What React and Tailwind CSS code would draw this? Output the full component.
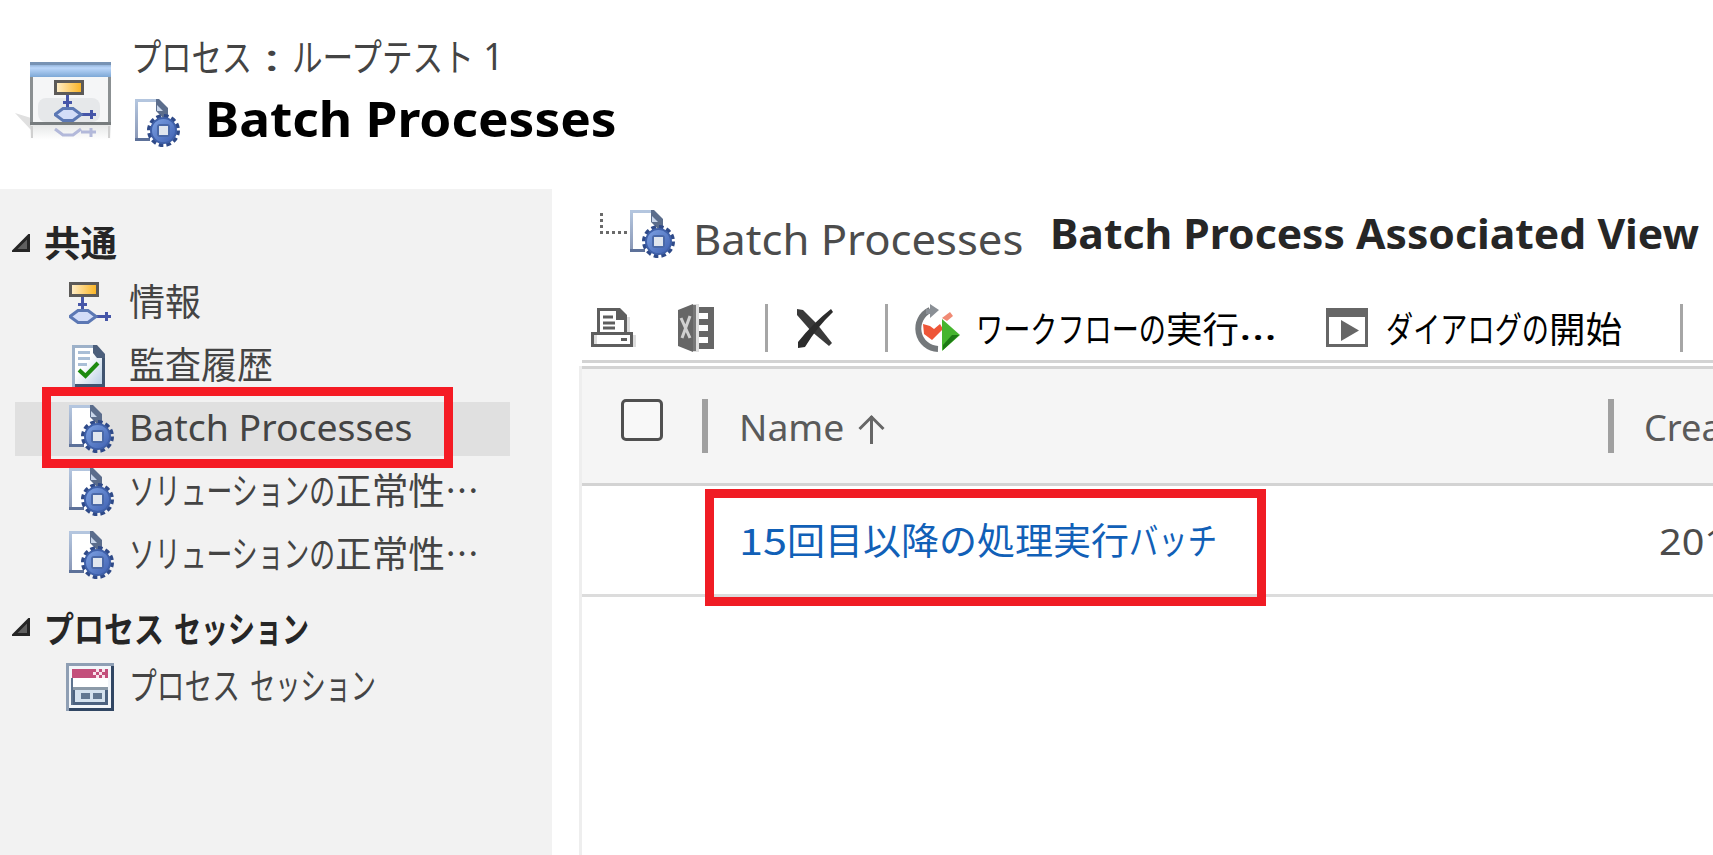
import React, { useLayoutEffect, useRef, useState } from "react";

const FONT = "font-['Noto_Sans','Noto_Sans_CJK_JP',sans-serif]";
const JP = "font-['Noto_Sans_CJK_JP',sans-serif]";

// Single line of text condensed or widened to a given width.
function FitText({ width, className = "", jp = false, children }) {
  const ref = useRef(null);
  const [s, setS] = useState(1);
  useLayoutEffect(() => {
    setS(width / ref.current.offsetWidth);
  }, [width]);
  return (
    <div className="shrink-0" style={{ width }}>
      <span
        ref={ref}
        className={`inline-block origin-left whitespace-nowrap ${jp ? JP : FONT} ${className}`}
        style={{ transform: `scaleX(${s})` }}
      >
        {children}
      </span>
    </div>
  );
}

// A line made of runs, each with its own width: kana are set narrower than kanji.
function FitRuns({ runs, className }) {
  return (
    <div className="flex shrink-0">
      {runs.map(([text, width, jp = true]) => (
        <FitText key={text} width={width} jp={jp} className={className}>{text}</FitText>
      ))}
    </div>
  );
}

function GearDoc({ className = "" }) {
  return (
    <svg viewBox="0 0 45 48" className={`h-12 w-[45px] shrink-0 ${className}`}>
      <defs>
        <linearGradient id="gear" x1="0" y1="0" x2="1" y2="1">
          <stop offset="0" stopColor="#7fa3e4" />
          <stop offset="1" stopColor="#3d5fb0" />
        </linearGradient>
        <linearGradient id="sheet" x1="0" y1="0" x2="0" y2="1">
          <stop offset="0" stopColor="#b4c6df" />
          <stop offset="1" stopColor="#8795b4" />
        </linearGradient>
      </defs>
      <path d="M1.5 1.5H22L30 10V42H1.5Z" fill="#fff" />
      <path d="M22 1.500H1.500V42" fill="none" stroke="url(#sheet)" strokeWidth="3" />
      <path d="M0 40.500H15" stroke="#5d7199" strokeWidth="3" />
      <path d="M21 0H24L33 9V18H27L21 12Z" fill="#5b6d8c" />
      <path d="M22 12V6L28 12Z" fill="#c9d6ea" />
      <circle cx="28.500" cy="31.500" r="14" fill="none" stroke="#2f4a88" strokeWidth="5" strokeDasharray="4.400 2.930" />
      <circle cx="28.500" cy="31.500" r="12.500" fill="url(#gear)" stroke="#3f60a8" strokeWidth="2" />
      <rect x="22" y="25" width="13" height="13" rx="3" fill="#4a69a8" />
      <rect x="24" y="27" width="9" height="9" fill="#e0e6ee" />
    </svg>
  );
}

function FlowShapes() {
  return (
    <>
      <defs>
        <linearGradient id="gold" x1="0" x2="1">
          <stop offset="0" stopColor="#fff0cf" />
          <stop offset="1" stopColor="#fbb21c" />
        </linearGradient>
      </defs>
      <rect x="1.500" y="1.500" width="27" height="12" fill="url(#gold)" stroke="#5c5a58" strokeWidth="3" />
      <path d="M13.500 15V28M9 22.500H18M27 34.500H42M37.500 30V39" stroke="#4656a8" strokeWidth="3" />
      <path d="M1 34.500L9 28.500H19L27 34.500L19 40.500H9Z" fill="#d3ddf8" stroke="#5c78b4" strokeWidth="3" />
    </>
  );
}

function FlowIcon() {
  return (
    <svg viewBox="0 0 42 42" className="h-[42px] w-[42px] shrink-0">
      <FlowShapes />
    </svg>
  );
}

function AuditIcon() {
  return (
    <svg viewBox="0 0 33 42" className="h-[42px] w-[33px] shrink-0">
      <defs>
        <linearGradient id="audit" x1="0" y1="0" x2="1" y2="1">
          <stop offset="0.400" stopColor="#ffffff" />
          <stop offset="1" stopColor="#b4cbe4" />
        </linearGradient>
      </defs>
      <path d="M1.500 1.500H22L31.500 11V40.500H1.500Z" fill="url(#audit)" stroke="#9db1c9" strokeWidth="3" />
      <path d="M24 3L31.500 11V40.500H3" fill="none" stroke="#405470" strokeWidth="3" />
      <path d="M21 0H25L33 9V13H25L21 8Z" fill="#4c5f7c" />
      <path d="M6 7.500H18M6 13.500H18M6 19.500H15" stroke="#a9bed6" strokeWidth="3" />
      <path d="M7 25L13.500 31L26 18" fill="none" stroke="#1d8a10" strokeWidth="4" />
    </svg>
  );
}

function SessionIcon() {
  return (
    <svg viewBox="0 0 48 48" className="h-12 w-12 shrink-0">
      <rect width="48" height="48" fill="#8f9fb4" />
      <path d="M48 3V48H3V45H45V3Z" fill="#314663" />
      <rect x="3" y="3" width="42" height="42" fill="#f3f6fa" />
      <rect x="6" y="15" width="36" height="9" fill="#fff" />
      <rect x="6" y="6" width="36" height="9" fill="#c34f7b" />
      <path d="M27 9H30V12H27ZM30 6H33V9H30ZM33 9H36V12H33ZM30 12H33V15H30ZM36 6H39V9H36ZM36 12H39V15H36Z" fill="#f8e4ec" />
      <rect x="6" y="24" width="36" height="18" fill="#4c6280" />
      <rect x="6" y="24" width="36" height="3" fill="#8c9aa8" />
      <rect x="9" y="27" width="30" height="12" fill="#d5e2ef" />
      <path d="M15 30H24V36H15ZM27 30H36V36H27Z" fill="#627791" />
      <path d="M6 15V42" stroke="#5e738e" strokeWidth="2" />
    </svg>
  );
}

function Triangle() {
  return (
    <svg viewBox="0 0 18 18" className="h-[18px] w-[18px] shrink-0">
      <path d="M16.500 2V16.500H2Z" fill="#606060" stroke="#262626" strokeWidth="3" />
    </svg>
  );
}

function ProcessWindowIcon() {
  return (
    <svg viewBox="0 0 96 84" className="h-[84px] w-24 shrink-0">
      <defs>
        <linearGradient id="bar" x1="0" y1="0" x2="0" y2="1">
          <stop offset="0" stopColor="#7096c0" />
          <stop offset="0.400" stopColor="#bcd7fa" />
          <stop offset="1" stopColor="#7da8d6" />
        </linearGradient>
        <linearGradient id="fade" x1="0" y1="0" x2="0" y2="1">
          <stop offset="0" stopColor="#b9bcbc" />
          <stop offset="1" stopColor="#ffffff" />
        </linearGradient>
      </defs>
      <path d="M0 51L16 56V68Z" fill="#e0e0e0" />
      <rect x="15" y="63" width="81" height="15" fill="url(#fade)" opacity="0.350" />
      <rect x="16.500" y="1.500" width="78" height="60" fill="#f5f6f7" stroke="#8b9092" strokeWidth="3" />
      <rect x="23" y="36" width="62" height="24" rx="8" fill="#e6e8ea" />
      <rect x="15" y="0" width="81" height="15" fill="url(#bar)" />
      <path d="M15 1.500H96" stroke="#7893b4" strokeWidth="3" />
      <rect x="15" y="60" width="81" height="3" fill="#777c7e" />
      <svg x="39" y="18" width="42" height="42" viewBox="0 0 42 42"><FlowShapes /></svg>
      <path d="M40 67L48 73H58L66 67M66 70H81M76 66V75" stroke="#b3b9da" strokeWidth="3" fill="none" />
      <path d="M17 64V76M94 64V76" stroke="#d0d0d0" strokeWidth="2" />
    </svg>
  );
}

function NavRow({ icon, label, runs, width, selected, jp }) {
  const text = "text-[37px] leading-[54px] text-[#444444]";
  return (
    <div className={`ml-[15px] flex h-[54px] w-[495px] items-center ${selected ? "bg-[#e0e0e0]" : ""}`}>
      <div className="flex w-[114px] shrink-0 pl-[54px]">{icon}</div>
      <div className={jp ? "pb-[6px]" : "pb-[4px]"}>
        {runs ? <FitRuns runs={runs} className={text} /> : <FitText width={width} jp={jp} className={text}>{label}</FitText>}
      </div>
    </div>
  );
}

const SOLUTION = [["ソリューションの", 206], ["正常性", 110], ["…", 34]];

const Divider = ({ className }) => <div className={`h-12 w-[3px] shrink-0 bg-[#a6a6a6] ${className}`} />;

export default function App() {
  return (
    <div className="relative flex h-[855px] w-[1713px] flex-col overflow-hidden bg-white">
      <header className="flex h-[189px] shrink-0 pl-[15px]">
        <div className="pt-[62px]"><ProcessWindowIcon /></div>
        <div className="flex flex-col pl-[20px] pt-[28px]">
          <FitRuns
            runs={[["プロセス", 121], ["\u00a0:\u00a0", 40], ["ループテスト", 182], ["\u00a01", 30, false]]}
            className="text-[38px] leading-[54px] text-[#444444]"
          />
          <div className="flex h-[66px] items-center gap-[25px] pl-[4px] pt-[6px]">
            <GearDoc className="mt-[10px]" />
            <FitText width={412} className="text-[49px] font-bold leading-[66px] text-black">Batch Processes</FitText>
          </div>
        </div>
      </header>

      <div className="flex min-h-0 flex-1">
        <aside className="w-[552px] shrink-0 bg-[#f2f2f2] pt-[27px]">
          <div className="flex h-[54px] items-center gap-[14px] pl-[12px]">
            <Triangle />
            <div className="pb-[4px]">
              <FitText width={73} jp className="text-[36px] font-bold leading-[54px] text-[#262626]">共通</FitText>
            </div>
          </div>
          <nav className="mt-[6px] flex flex-col gap-[9px]">
            <NavRow icon={<FlowIcon />} label="情報" width={72} jp />
            <NavRow icon={<span className="pl-[3px]"><AuditIcon /></span>} label="監査履歴" width={144} jp />
            <NavRow icon={<GearDoc />} label="Batch Processes" width={283} selected />
            <NavRow icon={<GearDoc />} runs={SOLUTION} jp />
            <NavRow icon={<GearDoc />} runs={SOLUTION} jp />
          </nav>
          <div className="mt-[18px] flex h-[54px] items-center gap-[14px] pl-[12px]">
            <Triangle />
            <FitRuns
              runs={[["プロセス", 120], ["\u00a0", 10], ["セッション", 135]]}
              className="text-[36px] font-bold leading-[54px] text-[#262626]"
            />
          </div>
          <nav className="mt-[6px]">
            <NavRow
              icon={<span className="-ml-[3px]"><SessionIcon /></span>}
              runs={[["プロセス", 111], ["\u00a0", 10], ["セッション", 126]]}
              jp
            />
          </nav>
        </aside>

        <main className="flex min-w-0 flex-1 flex-col overflow-hidden pl-[27px]">
          <div className="flex h-[93px] shrink-0 pl-[21px]">
            <div className="mt-[24px] h-[21px] w-[27px] border-b-[3px] border-l-[3px] border-dotted border-[#6a6a6a]" />
            <GearDoc className="ml-[3px] mt-[21px]" />
            <div className="ml-[18px] mt-[21px]">
              <FitText width={330} className="text-[42px] leading-[57px] text-[#4c4c4c]">Batch Processes</FitText>
            </div>
            <div className="ml-[27px] mt-[15px]">
              <FitText width={649} className="text-[42px] font-bold leading-[57px] text-[#262626]">Batch Process Associated View</FitText>
            </div>
          </div>

          <div className="ml-[3px] flex h-[81px] shrink-0 items-center border-b-[3px] border-[#d3d3d3] pt-[13px]">
            <svg viewBox="0 0 45 39" className="ml-[9px] h-[39px] w-[45px] shrink-0">
              <path d="M39 9H36V24H39ZM42 27H45V39H42ZM3 27H6V36H3Z" fill="#dcdcdc" />
              <path d="M7.500 24V1.500H27L34.500 9V24M1.500 25.500H40.500V37.500H1.500ZM12 9H22M12 15H24M12 20H24M30 31.500H36" fill="none" stroke="#5e5e5e" strokeWidth="3" />
              <path d="M25 0H29L36 7V12H25Z" fill="#5e5e5e" />
            </svg>
            <svg viewBox="0 0 36 48" className="ml-[42px] h-12 w-9 shrink-0">
              <path d="M0 6L15 0V48L0 42Z" fill="#666" />
              <path d="M15 0H21V48H15Z" fill="#dedede" />
              <path d="M15 1H18V47H15Z" fill="#777" />
              <path d="M3 14L12 34M12 12L4 34" stroke="#d0d0d0" strokeWidth="3" />
              <path d="M21 3H36V45H21V39H30V33H21V27H30V21H21V15H30V9H21Z" fill="#666" />
            </svg>
            <Divider className="ml-[51px]" />
            <svg viewBox="0 0 39 42" className="ml-[27px] h-[42px] w-[39px] shrink-0">
              <path d="M2 2L8 3L22 17L37 36L34 39L16 24L2 8Z" fill="#3a3a3a" />
              <path d="M36 2L38 5Q22 20 10 40L3 41V35Q18 16 36 2Z" fill="#2c2c2c" />
            </svg>
            <Divider className="ml-[51px]" />
            <svg viewBox="0 0 48 48" className="ml-[24px] h-12 w-12 shrink-0">
              <path d="M18 6A20.500 20.500 0 0 0 26 45" fill="none" stroke="#74787b" strokeWidth="6" />
              <path d="M14 5H18V0L27 6L18 14V10H14Z" fill="#8a8f95" />
              <path d="M11 20L18 22L22 25L28 20L31 25L20 36L12 30Z" fill="#ee5638" />
              <path d="M30 14L38 8L41 12L35 17Z" fill="#f08a74" />
              <path d="M30 15L48 31L30 47Z" fill="#45b52e" />
              <path d="M47 31L31 46V41L40 31Z" fill="#1d7a14" />
            </svg>
            <div className="-mt-[2px] ml-[16px]">
              <FitRuns runs={[["ワークフローの", 190], ["実行", 73], ["...", 38, false]]} className="text-[36px] leading-[54px] text-black" />
            </div>
            <svg viewBox="0 0 42 39" className="ml-[49px] h-[39px] w-[42px] shrink-0">
              <rect x="1.500" y="1.500" width="39" height="36" fill="#fff" stroke="#666" strokeWidth="3" />
              <rect width="42" height="9" fill="#666" />
              <path d="M15 12L33 22.500L15 33Z" fill="#666" />
            </svg>
            <div className="-mt-[2px] ml-[18px]">
              <FitRuns runs={[["ダイアログの", 163], ["開始", 73]]} className="text-[36px] leading-[54px] text-black" />
            </div>
            <Divider className="ml-[58px]" />
          </div>

          <div className="mt-[3px] flex min-h-0 flex-1 flex-col border-l-[3px] border-[#eeeeee]">
            <div className="flex h-[120px] shrink-0 border-y-[3px] border-[#d3d3d3] bg-[#f5f5f5]">
              <div className="ml-[39px] mt-[30px] h-[42px] w-[42px] shrink-0 rounded-[5px] border-[3px] border-[#505050] bg-[#f8f8f8]" />
              <div className="ml-[39px] mt-[30px] h-[54px] w-[6px] shrink-0 bg-[#a0a0a0]" />
              <div className="ml-[31px] mt-[31px]">
                <FitText width={105} className="text-[37px] leading-[54px] text-[#5a5a5a]">Name</FitText>
              </div>
              <svg viewBox="0 0 27 30" className="ml-[14px] mt-[45px] h-[30px] w-[27px] shrink-0">
                <path d="M13.500 30V2M1.500 15L13.500 3L25.500 15" fill="none" stroke="#666" strokeWidth="3" />
              </svg>
              <div className="ml-[723px] mt-[30px] h-[54px] w-[6px] shrink-0 bg-[#a0a0a0]" />
              <div className="ml-[30px] mt-[31px]">
                <FitText width={134} className="text-[37px] leading-[54px] text-[#5a5a5a]">Created</FitText>
              </div>
            </div>
            <div className="flex h-[111px] shrink-0 border-b-[3px] border-[#dcdcdc]">
              <div className="ml-[157px] mt-[26px]">
                <FitRuns runs={[["15", 48], ["回目以降の処理実行", 342], ["バッチ", 88]]} className="text-[37px] leading-[54px] text-[#1160b7]" />
              </div>
              <div className="ml-[442px] mt-[28px]">
                <FitText width={91} className="text-[37px] leading-[54px] text-[#4c4c4c]">2019</FitText>
              </div>
            </div>
          </div>
        </main>
      </div>

      <div className="absolute left-[42px] top-[387px] h-[81px] w-[411px] border-[9px] border-[#f51b24]" />
      <div className="absolute left-[705px] top-[489px] h-[117px] w-[561px] border-[9px] border-[#f01c24]" />
    </div>
  );
}
